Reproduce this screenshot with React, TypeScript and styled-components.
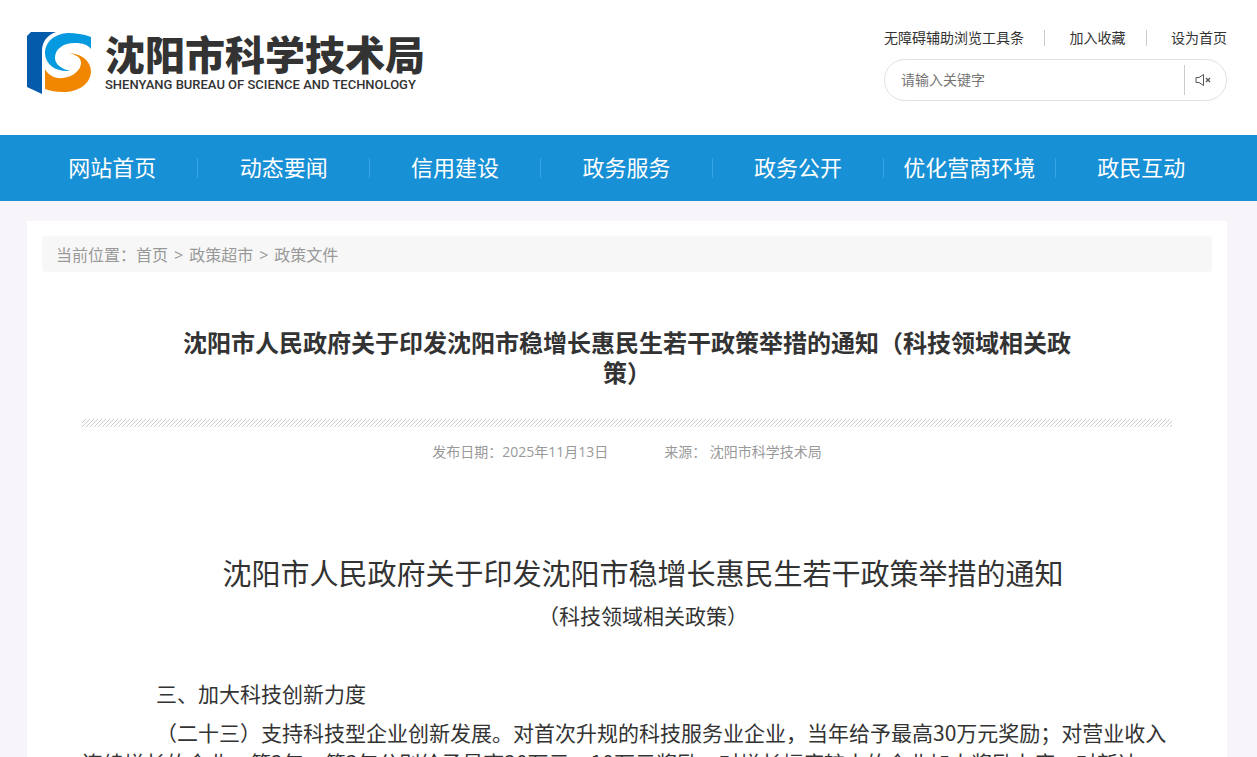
import React from 'react';
import styled, { createGlobalStyle } from 'styled-components';

const GlobalStyle = createGlobalStyle`
  *, *::before, *::after { box-sizing: border-box; }
  html { scrollbar-width: none; }
  body {
    margin: 0;
    background: #f7f5f9;
    color: #333;
    font: 14px/20px "Open Sans", "Noto Sans CJK SC", sans-serif;
  }
  a { color: inherit; text-decoration: none; }
  h1, h2, h3, p, ul { margin: 0; padding: 0; }
`;

const Header = styled.header`
  background: #fff;
`;

const Wrap = styled.div`
  margin: 0 30px 0 27px;
`;

const HeaderRow = styled(Wrap)`
  display: flex;
  justify-content: space-between;
  align-items: flex-start;
  padding: 28px 0 34px;
`;

const Brand = styled.a`
  display: flex;
  align-items: center;
  gap: 13px;
  padding-top: 4px;
`;

const BrandText = styled.span`
  display: flex;
  flex-direction: column;
  gap: 4px;
`;

const BrandName = styled.span`
  font: 900 40px/40px "Noto Sans CJK SC", sans-serif;
`;

const BrandLatin = styled.span`
  font: 500 13px/16px Roboto, "Liberation Sans", sans-serif;
  color: #333;
`;

const Tools = styled.div`
  width: 343px;
`;

const ToolLinks = styled.ul`
  display: flex;
  justify-content: space-between;
  align-items: center;
  list-style: none;
  height: 20px;
`;

const Bar = styled.li`
  width: 1px;
  height: 16px;
  margin-right: 4px;
  background: #ccc;
`;

const Search = styled.form`
  display: flex;
  align-items: center;
  height: 42px;
  margin-top: 11px;
  padding: 0 12px 0 16px;
  border: 1px solid #e1e1e1;
  border-radius: 21px;
`;

const SearchInput = styled.input`
  flex: 1;
  min-width: 0;
  border: 0;
  padding: 0;
  outline: 0;
  background: none;
  font: inherit;
  &::placeholder { color: #757575; opacity: 1; }
`;

const SoundButton = styled.button`
  display: flex;
  align-items: center;
  height: 30px;
  padding: 0 3px 0 10px;
  border: 0;
  border-left: 1px solid #ccc;
  background: none;
`;

const Nav = styled.nav`
  background: #1890d5;
`;

const NavList = styled.ul`
  && { margin: 0 30px 0 27px; }
  display: flex;
  list-style: none;
`;

const NavItem = styled.li`
  flex: 1;
  display: flex;
  align-items: center;
  height: 66px;
  &:not(:last-child)::after {
    content: "";
    width: 1px;
    height: 20px;
    background: #35a5e6;
  }
`;

const NavLink = styled.a`
  flex: 1;
  padding-bottom: 2px;
  text-align: center;
  color: #fff;
  font-size: 22px;
  line-height: 64px;
  white-space: nowrap;
`;

const Panel = styled.main`
  margin: 20px 30px 0 27px;
  padding: 15px;
  background: #fff;
`;

const Crumbs = styled.nav`
  display: flex;
  height: 36px;
  padding: 0 14px;
  border-radius: 4px;
  background: #f7f7f7;
  color: #999;
  font-size: 16px;
  line-height: 38px;
`;

const CrumbArrow = styled.span`
  margin: 0 6px;
`;

const Article = styled.article`
  padding: 56px 40px 40px;
`;

const Title = styled.h1`
  max-width: 900px;
  margin: 0 auto;
  text-align: center;
  font-size: 24px;
  line-height: 30px;
`;

const Stripes = styled.svg`
  display: block;
  width: 100%;
  height: 8px;
  margin-top: 31px;
`;

const Meta = styled.div`
  display: flex;
  justify-content: center;
  gap: 56px;
  margin-top: 15px;
  color: #999;
`;

const Heading = styled.h2`
  && { margin-top: 90px; }
  text-align: center;
  text-indent: 32px;
  font-size: 29px;
  font-weight: 400;
  line-height: 44px;
`;

const SubHeading = styled.h3`
  && { margin-bottom: 42px; }
  text-align: center;
  text-indent: 32px;
  font-size: 21px;
  font-weight: 400;
  line-height: 40px;
`;

const Para = styled.p`
  text-indent: 74px;
  font: 21px/30px "Noto Sans CJK SC", sans-serif;
  & + & { margin-top: 9px; }
`;

const LogoMark = () => (
  <svg width="65" height="62" viewBox="0 0 65 62" aria-hidden="true">
    <path d="M4 0H29C20 3 15 10 15 19V62L0 55V4Z" fill="#045bab" />
    <path d="M64 5C56 2 49 1 41 1C29 2 18 8 18 22C19 33 29 40 43 39C34 37 28 32 28 26C28 17 36 11 48 11C56 11 61 13 64 17Z" fill="#0599df" />
    <path d="M42 21C55 22 64 29 64 40C63 52 52 60 36 60C29 60 23 59 18 57V37C21 43 28 47 36 46C46 45 54 38 54 31C54 25 49 23 42 21Z" fill="#f18600" />
  </svg>
);

const SoundOff = () => (
  <svg width="16" height="14" viewBox="0 0 16 14" fill="none" stroke="#555" strokeWidth="1" aria-hidden="true">
    <path d="M1 4.5H4L8.5 1.5V12.5L4 9.5H1Z" />
    <path d="M11 5L15 9M15 5L11 9" strokeWidth="1.2" />
  </svg>
);

const navItems = ['网站首页', '动态要闻', '信用建设', '政务服务', '政务公开', '优化营商环境', '政民互动'];

export default function App() {
  return (
    <>
      <GlobalStyle />
      <Header>
        <HeaderRow>
          <Brand href="#">
            <LogoMark />
            <BrandText>
              <BrandName>沈阳市科学技术局</BrandName>
              <BrandLatin>SHENYANG BUREAU OF SCIENCE AND TECHNOLOGY</BrandLatin>
            </BrandText>
          </Brand>
          <Tools>
            <ToolLinks>
              <li><a href="#">无障碍辅助浏览工具条</a></li>
              <Bar aria-hidden="true" />
              <li><a href="#">加入收藏</a></li>
              <Bar aria-hidden="true" />
              <li><a href="#">设为首页</a></li>
            </ToolLinks>
            <Search>
              <SearchInput type="text" aria-label="请输入关键字" placeholder="请输入关键字" />
              <SoundButton type="button" aria-label="静音"><SoundOff /></SoundButton>
            </Search>
          </Tools>
        </HeaderRow>
      </Header>
      <Nav>
        <NavList>
          {navItems.map((label) => (
            <NavItem key={label}><NavLink href="#">{label}</NavLink></NavItem>
          ))}
        </NavList>
      </Nav>
      <Panel>
        <Crumbs>
          <span>当前位置：</span>
          <a href="#">首页</a>
          <CrumbArrow>&gt;</CrumbArrow>
          <a href="#">政策超市</a>
          <CrumbArrow>&gt;</CrumbArrow>
          <a href="#">政策文件</a>
        </Crumbs>
        <Article>
          <Title>沈阳市人民政府关于印发沈阳市稳增长惠民生若干政策举措的通知（科技领域相关政策）</Title>
          <Stripes aria-hidden="true">
            <defs>
              <pattern id="hatch" width="4" height="8" patternUnits="userSpaceOnUse">
                <path d="M-4 8L4 0M0 8L8 0M-8 8L0 0" stroke="#ccc" strokeWidth="1" />
              </pattern>
            </defs>
            <rect width="100%" height="8" fill="url(#hatch)" />
          </Stripes>
          <Meta>
            <span>发布日期：2025年11月13日</span>
            <span>来源： 沈阳市科学技术局</span>
          </Meta>
          <Heading>沈阳市人民政府关于印发沈阳市稳增长惠民生若干政策举措的通知</Heading>
          <SubHeading>（科技领域相关政策）</SubHeading>
          <Para>三、加大科技创新力度</Para>
          <Para>（二十三）支持科技型企业创新发展。对首次升规的科技服务业企业，当年给予最高30万元奖励；对营业收入连续增长的企业，第2年、第3年分别给予最高20万元、10万元奖励，对增长幅度较大的企业加大奖励力度，对新达</Para>
        </Article>
      </Panel>
    </>
  );
}
